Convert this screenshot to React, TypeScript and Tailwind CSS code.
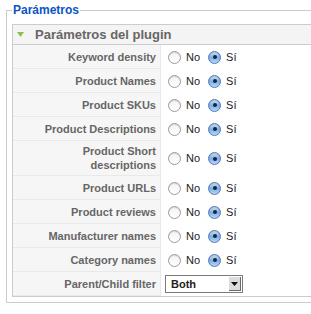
const rows: { label: string; kind: "radio" | "select" }[] = [
  { label: "Keyword density", kind: "radio" },
  { label: "Product Names", kind: "radio" },
  { label: "Product SKUs", kind: "radio" },
  { label: "Product Descriptions", kind: "radio" },
  { label: "Product Short descriptions", kind: "radio" },
  { label: "Product URLs", kind: "radio" },
  { label: "Product reviews", kind: "radio" },
  { label: "Manufacturer names", kind: "radio" },
  { label: "Category names", kind: "radio" },
  { label: "Parent/Child filter", kind: "select" },
];

function Radio({ checked }: { checked?: boolean }) {
  if (checked) {
    return (
      <span className="flex h-[13px] w-[13px] shrink-0 items-center justify-center rounded-full border border-[#4f78b5] bg-gradient-to-b from-[#d6e6fa] via-[#79aeea] to-[#b9d6f7] shadow-[inset_0_1px_1px_rgba(0,0,0,0.15)]">
        <span className="h-[4px] w-[4px] rounded-full bg-[#1d2430]" />
      </span>
    );
  }
  return (
    <span className="h-[13px] w-[13px] shrink-0 rounded-full border border-[#9c9c9c] bg-gradient-to-b from-[#f2f2f2] to-white shadow-[inset_0_1px_1px_rgba(0,0,0,0.12)]" />
  );
}

function YesNo() {
  return (
    <div className="flex items-center pl-[7px] text-[11px] text-[#222]">
      <Radio />
      <span className="ml-[5px]">No</span>
      <span className="ml-[8px]">
        <Radio checked />
      </span>
      <span className="ml-[5px]">Sí</span>
    </div>
  );
}

function Select() {
  return (
    <div className="ml-[4px] flex h-[18px] w-[78px] items-stretch border border-[#7a7a7a] bg-white text-[11px] font-bold text-[#222]">
      <span className="flex flex-1 items-center pl-[5px] leading-none">Both</span>
      <span className="m-[1px] flex w-[12px] items-center justify-center border-r border-b border-[#6b6b6b] bg-[#dcdcdc]">
        <svg width="7" height="4" viewBox="0 0 7 4">
          <path d="M0 0h7L3.5 4z" fill="#111" />
        </svg>
      </span>
    </div>
  );
}

export default function App() {
  return (
    <div className="h-[314px] w-[311px] overflow-hidden bg-white font-['Liberation_Sans',Arial,sans-serif]">
      <fieldset className="ml-[6px] mt-[3px] w-[340px] border border-[#cccccc] pb-[5px] pl-[5px]">
        <legend className="px-[1px] text-[12px] font-bold leading-[14px] text-[#0b55c4]">
          Parámetros
        </legend>
        <div className="mt-[7px] border border-[#cccccc]">
          <div className="flex h-[20px] items-center border-b border-[#cccccc] bg-[#f4f4f4] text-[13px] font-bold text-[#666]">
            <svg width="7" height="5" viewBox="0 0 7 5" className="ml-[4px]">
              <path d="M0 0h7L3.5 5z" fill="#8cc152" />
            </svg>
            <span className="ml-[11px]">Parámetros del plugin</span>
          </div>
          {rows.map((r) => (
            <div key={r.label} className="flex">
              <div className="flex w-[148px] shrink-0 items-center justify-end border-r border-b border-[#e9e9e9] bg-[#f6f6f6] py-[3px] pl-[6px] pr-[4px] text-right text-[11px] font-bold leading-[14px] text-[#666]">
                <span className="flex min-h-[17px] items-center">{r.label}</span>
              </div>
              <div className="flex flex-1 items-center">
                {r.kind === "radio" ? <YesNo /> : <Select />}
              </div>
            </div>
          ))}
        </div>
      </fieldset>
    </div>
  );
}
